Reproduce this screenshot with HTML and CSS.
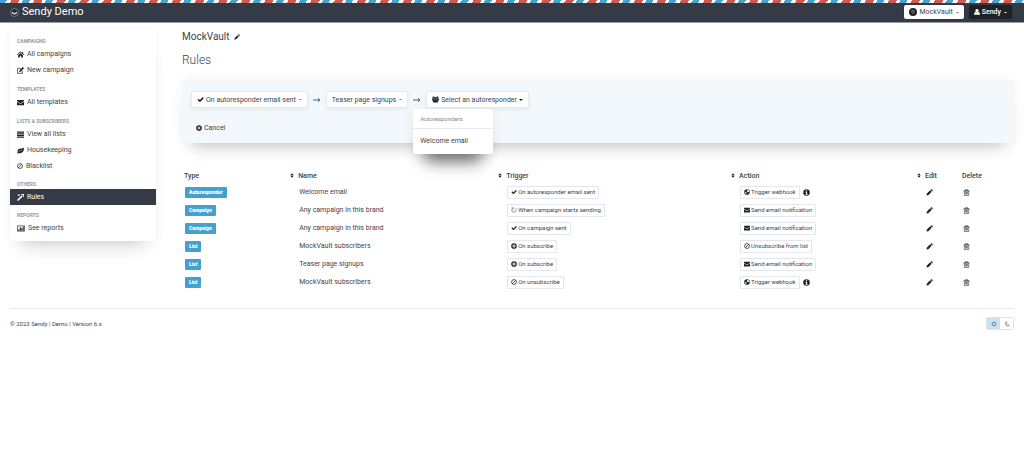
FILE: index.html
```html
<!DOCTYPE html>
<html lang="en">
<head>
<meta charset="utf-8">
<meta name="viewport" content="width=device-width, initial-scale=1">
<title>Rules - Sendy Demo</title>
<link rel="stylesheet" href="styles.css">
</head>
<body>
<svg class="sprite" aria-hidden="true">
  <symbol id="check" viewBox="0 0 16 16"><path d="M1 8.500l2.500-2.500 3 3L13 2.500 15.500 5l-9 9z"/></symbol>
  <symbol id="home" viewBox="0 0 16 16"><path d="M8 1l8 7-1.200 1.300L8 3.500 1.200 9.300 0 8l8-7zM11.500 2H14v4l-2.500-2zM8 5l5.500 4.700V15H9.500v-4h-3v4h-4V9.700z"/></symbol>
  <symbol id="compose" viewBox="0 0 16 16"><path d="M12.500 9.500V14.500H1V3H9" fill="none" stroke="currentColor" stroke-width="1.600"/><path d="M13.200 0L16 2.800 8.500 11 5 11.500 5.600 8z"/></symbol>
  <symbol id="mail" viewBox="0 0 16 16"><path d="M0 2h16v2.500L8 10 0 4.500z"/><path d="M0 6l8 5.500L16 6v8.500H0z"/></symbol>
  <symbol id="list" viewBox="0 0 16 16"><path d="M0 1h16v3H0zM0 5h16v3H0zM0 9h16v3H0zM0 13h16v2.500H0z"/></symbol>
  <symbol id="leaf" viewBox="0 0 16 16"><path d="M15.500 1C17 8 13 14 7 14c-2 0-3-.8-4-.5L1 15.500 0 14l1.500-2.200C0 6.500 4 3.500 9 3.500c3 0 5-1 6.500-2.500z"/><path d="M4 11c2-2.500 4-3.500 8-4" fill="none" stroke="#fff" stroke-width="1"/></symbol>
  <symbol id="ban" viewBox="0 0 16 16"><circle cx="8" cy="8" r="6.500" fill="none" stroke="currentColor" stroke-width="2"/><path d="M3.700 12.300l8.600-8.600" stroke="currentColor" stroke-width="2"/></symbol>
  <symbol id="wand" viewBox="0 0 16 16"><path d="M0 13.500L10.500 3 13 5.500 2.500 16zM1 1h6l-1 3H2zM10 0h6v6l-2 1V2.500h-4z"/></symbol>
  <symbol id="chart" viewBox="0 0 18 16"><path d="M.8 2h16.400v12H.8z" fill="none" stroke="currentColor" stroke-width="1.600"/><path d="M3 9h2.300v4H3zM6.300 5h2.300v8H6.300zM9.600 7h2.300v6H9.600zM13 4h2.300v9H13z"/></symbol>
  <symbol id="pencil" viewBox="0 0 16 16"><path d="M1 15l1-4.500L9.500 3 13 6.500 5.500 14zM10.500 2L12 .8c.5-.4 1-.4 1.500 0L15.300 2.600c.4.500.4 1 0 1.500L14 5.500z"/></symbol>
  <symbol id="cross" viewBox="0 0 16 16"><path fill-rule="evenodd" d="M8 .5a7.500 7.500 0 100 15 7.500 7.500 0 000-15zM5.500 4L8 6.500 10.500 4 12 5.500 9.500 8l2.500 2.500-1.500 1.500L8 9.500 5.500 12 4 10.500 6.500 8 4 5.500z"/></symbol>
  <symbol id="plus" viewBox="0 0 16 16"><path fill-rule="evenodd" d="M8 .5a7.500 7.500 0 100 15 7.500 7.500 0 000-15zM6.800 3.500h2.400v3.300h3.300v2.400H9.200v3.300H6.800V9.200H3.500V6.800h3.300z"/></symbol>
  <symbol id="info" viewBox="0 0 16 16"><path fill-rule="evenodd" d="M8 .5a7.500 7.500 0 100 15 7.500 7.500 0 000-15zM6.700 2.800h2.600v2.400H6.700zM5.700 6.300h3.700v5.200h1.200v1.800H5.700v-1.800H7V8.100H5.700z"/></symbol>
  <symbol id="spin" viewBox="0 0 16 16"><path d="M4 3.500a6 6 0 108.500.2" fill="none" stroke="currentColor" stroke-width="1.600" stroke-dasharray="4 1"/><path d="M1.500 2H6v4.500" fill="none" stroke="currentColor" stroke-width="1.200"/></symbol>
  <symbol id="globe" viewBox="0 0 16 16"><path fill-rule="evenodd" d="M8 .5a7.500 7.500 0 100 15 7.500 7.500 0 000-15zM8.500 3l3.500-.5 2 4-1.500 2.500-2-1.500L8 7.500 7 5.500zM2.500 7l3 1.500 1.500 2-1 3-2.500-2z"/></symbol>
  <symbol id="users" viewBox="0 0 18 16"><circle cx="4" cy="3" r="3"/><circle cx="14" cy="3" r="3"/><circle cx="9" cy="6" r="3.500"/><path d="M0 10V7c0-1.500 2-1.500 4-1.500L6 9l-3 2zM18 10V7c0-1.500-2-1.500-4-1.500L12 9l3 2zM2.500 16C2 11 4 9.500 9 9.500s7 1.500 6.500 6.500z"/></symbol>
  <symbol id="user" viewBox="0 0 16 16"><circle cx="8" cy="4.500" r="4.500"/><path d="M0 15.500C0 10 2 8.500 4.500 8c2 1.500 5 1.500 7 0 2.500.5 4.500 2 4.500 7.500z"/></symbol>
  <symbol id="trash" viewBox="0 0 16 16"><path d="M3 4.500h10V15H3zM1 4h14M5.500 3.500V1.500h5v2M6 6.500v6M8 6.500v6M10 6.500v6" fill="none" stroke="currentColor" stroke-width="1.300"/></symbol>
  <symbol id="arrow" viewBox="0 0 16 12"><path d="M0 6h13M10 2.500L14 6l-4 3.500" fill="none" stroke="currentColor" stroke-width="2"/></symbol>
  <symbol id="sort" viewBox="0 0 8 12"><path d="M0 5.500l4-5 4 5zM0 6.500h8l-4 5z"/></symbol>
  <symbol id="sun" viewBox="0 0 16 16"><circle cx="8" cy="8" r="4.500" fill="none" stroke="currentColor" stroke-width="2"/><path d="M8 0v2M8 14v2M0 8h2M14 8h2M2.300 2.300l1.500 1.500M12.200 12.200l1.500 1.500M2.300 13.700l1.500-1.500M12.200 3.800l1.500-1.500" stroke="currentColor" stroke-width="1.300"/></symbol>
  <symbol id="moon" viewBox="0 0 16 16"><path d="M7 2a6 6 0 107 9.500C9.500 12.500 6 8 7 2z" fill="none" stroke="currentColor" stroke-width="1.800"/></symbol>
  <symbol id="logo" viewBox="0 0 16 16"><circle cx="8" cy="8" r="7" fill="#23272f" stroke="#aab0ba" stroke-width="1"/><path d="M3.500 6L8 9.500 12.500 6v2.500c0 4-9 4-9 0z" fill="#d8dbe0"/></symbol>
  <symbol id="vault" viewBox="0 0 16 16"><circle cx="8" cy="8" r="8" fill="#20242c"/><path d="M3.500 5.500h9M4.500 8h7M6 10.500h3.500" stroke="#aeb4bd" stroke-width="1"/></symbol>
</svg>

<header class="topbar">
  <a class="brand" href="#"><svg class="icon icon-logo"><use href="#logo"/></svg>Sendy Demo</a>
  <div class="account">
    <button class="btn btn-brand" type="button"><svg class="icon icon-vault"><use href="#vault"/></svg>MockVault<i class="caret"></i></button>
    <button class="btn btn-user" type="button"><svg class="icon icon-small"><use href="#user"/></svg>Sendy<i class="caret"></i></button>
  </div>
</header>

<div class="layout">
  <nav class="sidebar">
    <h2>Campaigns</h2>
    <a href="#"><svg class="icon"><use href="#home"/></svg>All campaigns</a>
    <a href="#"><svg class="icon"><use href="#compose"/></svg>New campaign</a>
    <h2>Templates</h2>
    <a href="#"><svg class="icon"><use href="#mail"/></svg>All templates</a>
    <h2>Lists &amp; subscribers</h2>
    <a href="#"><svg class="icon"><use href="#list"/></svg>View all lists</a>
    <a href="#"><svg class="icon"><use href="#leaf"/></svg>Housekeeping</a>
    <a href="#"><svg class="icon icon-small"><use href="#ban"/></svg>Blacklist</a>
    <h2>Others</h2>
    <a class="active" href="#"><svg class="icon"><use href="#wand"/></svg>Rules</a>
    <h2>Reports</h2>
    <a href="#"><svg class="icon icon-wide"><use href="#chart"/></svg>See reports</a>
  </nav>

  <main>
    <div class="brand-name">MockVault <button class="plain" type="button" aria-label="Edit brand"><svg class="icon icon-small"><use href="#pencil"/></svg></button></div>
    <h1>Rules</h1>

    <section class="panel">
      <div class="steps">
        <button class="btn" type="button"><svg class="icon"><use href="#check"/></svg>On autoresponder email sent<i class="caret"></i></button>
        <svg class="icon arrow"><use href="#arrow"/></svg>
        <button class="btn" type="button">Teaser page signups<i class="caret"></i></button>
        <svg class="icon arrow"><use href="#arrow"/></svg>
        <div class="dropdown">
          <button class="btn" type="button" aria-expanded="true"><svg class="icon"><use href="#users"/></svg>Select an autoresponder<i class="caret dark"></i></button>
          <div class="menu">
            <div class="menu-title">Autoresponders</div>
            <a href="#">Welcome email</a>
          </div>
        </div>
      </div>
      <button class="plain cancel" type="button"><svg class="icon icon-small"><use href="#cross"/></svg>Cancel</button>
    </section>

    <table class="rules">
      <colgroup><col class="c-type"><col class="c-name"><col class="c-trigger"><col class="c-action"><col class="c-edit"><col class="c-delete"></colgroup>
      <thead>
        <tr>
          <th>Type</th>
          <th><svg class="icon sort"><use href="#sort"/></svg>Name</th>
          <th><svg class="icon sort"><use href="#sort"/></svg>Trigger</th>
          <th><svg class="icon sort"><use href="#sort"/></svg>Action</th>
          <th><svg class="icon sort"><use href="#sort"/></svg>Edit</th>
          <th>Delete</th>
        </tr>
      </thead>
      <tbody>
        <tr>
          <td><span class="label">Autoresponder</span></td><td>Welcome email</td>
          <td><span class="tag"><svg class="icon"><use href="#check"/></svg>On autoresponder email sent</span></td>
          <td><span class="tag"><svg class="icon"><use href="#globe"/></svg>Trigger webhook</span><svg class="icon info"><use href="#info"/></svg></td>
          <td><button class="plain" type="button" aria-label="Edit"><svg class="icon"><use href="#pencil"/></svg></button></td>
          <td><button class="plain" type="button" aria-label="Delete"><svg class="icon"><use href="#trash"/></svg></button></td>
        </tr>
        <tr>
          <td><span class="label">Campaign</span></td><td>Any campaign in this brand</td>
          <td><span class="tag"><svg class="icon"><use href="#spin"/></svg>When campaign starts sending</span></td>
          <td><span class="tag"><svg class="icon"><use href="#mail"/></svg>Send email notification</span></td>
          <td><button class="plain" type="button" aria-label="Edit"><svg class="icon"><use href="#pencil"/></svg></button></td>
          <td><button class="plain" type="button" aria-label="Delete"><svg class="icon"><use href="#trash"/></svg></button></td>
        </tr>
        <tr>
          <td><span class="label">Campaign</span></td><td>Any campaign in this brand</td>
          <td><span class="tag"><svg class="icon"><use href="#check"/></svg>On campaign sent</span></td>
          <td><span class="tag"><svg class="icon"><use href="#mail"/></svg>Send email notification</span></td>
          <td><button class="plain" type="button" aria-label="Edit"><svg class="icon"><use href="#pencil"/></svg></button></td>
          <td><button class="plain" type="button" aria-label="Delete"><svg class="icon"><use href="#trash"/></svg></button></td>
        </tr>
        <tr>
          <td><span class="label">List</span></td><td>MockVault subscribers</td>
          <td><span class="tag"><svg class="icon"><use href="#plus"/></svg>On subscribe</span></td>
          <td><span class="tag"><svg class="icon"><use href="#ban"/></svg>Unsubscribe from list</span></td>
          <td><button class="plain" type="button" aria-label="Edit"><svg class="icon"><use href="#pencil"/></svg></button></td>
          <td><button class="plain" type="button" aria-label="Delete"><svg class="icon"><use href="#trash"/></svg></button></td>
        </tr>
        <tr>
          <td><span class="label">List</span></td><td>Teaser page signups</td>
          <td><span class="tag"><svg class="icon"><use href="#plus"/></svg>On subscribe</span></td>
          <td><span class="tag"><svg class="icon"><use href="#mail"/></svg>Send email notification</span></td>
          <td><button class="plain" type="button" aria-label="Edit"><svg class="icon"><use href="#pencil"/></svg></button></td>
          <td><button class="plain" type="button" aria-label="Delete"><svg class="icon"><use href="#trash"/></svg></button></td>
        </tr>
        <tr>
          <td><span class="label">List</span></td><td>MockVault subscribers</td>
          <td><span class="tag"><svg class="icon"><use href="#ban"/></svg>On unsubscribe</span></td>
          <td><span class="tag"><svg class="icon"><use href="#globe"/></svg>Trigger webhook</span><svg class="icon info"><use href="#info"/></svg></td>
          <td><button class="plain" type="button" aria-label="Edit"><svg class="icon"><use href="#pencil"/></svg></button></td>
          <td><button class="plain" type="button" aria-label="Delete"><svg class="icon"><use href="#trash"/></svg></button></td>
        </tr>
      </tbody>
    </table>
  </main>
</div>

<footer class="footer">
  <p>© 2023 <a href="#">Sendy</a> | <a href="#">Demo</a> | Version 6.x</p>
  <div class="theme">
    <button class="on" type="button" aria-label="Light theme"><svg class="icon"><use href="#sun"/></svg></button>
    <button type="button" aria-label="Dark theme"><svg class="icon"><use href="#moon"/></svg></button>
  </div>
</footer>
</body>
</html>
```
FILE: styles.css
```css
* { box-sizing: border-box; }
body {
  margin: 0;
  background: #fff;
  color: #3d434c;
  font-family: Roboto, "Liberation Sans", sans-serif;
  font-size: 7px;
  line-height: 10px;
}
a { color: inherit; text-decoration: none; }
button { font: inherit; color: inherit; cursor: pointer; }
.sprite { display: none; }
.icon { width: 7px; height: 7px; flex: none; fill: currentColor; color: #1f242c; }
.icon-small { width: 6px; height: 6px; }
.icon-wide { width: 8px; }

.topbar {
  display: flex;
  align-items: center;
  justify-content: space-between;
  height: 23px;
  padding: 3px 12px 1px 10px;
  border-bottom: 1px solid #9a9fa7;
  background:
    repeating-linear-gradient(120deg, #4aa3cf 0 6px, #fff 6px 10px, #cf5a52 10px 17px, #fff 17px 20px) top / 100% 3px no-repeat,
    #343a46;
}
.brand { display: flex; align-items: center; gap: 3px; color: #fff; font-size: 11px; line-height: 14px; }
.icon-logo { width: 9px; height: 9px; }
.account { display: flex; gap: 5px; }
.btn {
  display: flex;
  align-items: center;
  gap: 2px;
  height: 17px;
  padding: 0 5px;
  border: 1px solid #e7eaed;
  border-radius: 2px;
  background: #fff;
  box-shadow: 0 2px 4px rgba(0, 0, 0, .06);
  white-space: nowrap;
}
.btn-brand, .btn-user { height: 14px; border: 0; }
.btn-user { background: #202124; color: #fff; font-weight: 500; }
.btn-user .icon { color: #fff; }
.icon-vault { width: 8px; height: 8px; }
.caret { border: 1px solid transparent; border-top-color: #777; border-bottom: 0; width: 3px; margin-left: 1px; }
.btn-user .caret { border-top-color: #fff; }
.caret.dark { border-width: 2px 2px 0; width: 4px; border-top-color: #222; margin-left: 0; }

.layout {
  display: grid;
  grid-template-columns: 146px minmax(0, 1fr);
  gap: 26px;
  align-items: start;
  padding: 7px 10px 0;
}
.sidebar {
  padding-bottom: 5px;
  border-radius: 2px;
  background: #fff;
  box-shadow: 0 0 10px rgba(0, 0, 0, .05), 0 16px 18px -12px rgba(0, 0, 0, .18);
}
.sidebar h2 {
  margin: 0;
  padding: 6px 7px 0;
  color: #999;
  font-size: 5px;
  font-weight: 700;
  line-height: 10px;
  text-transform: uppercase;
}
.sidebar a { display: flex; align-items: center; gap: 3px; height: 16px; padding: 0 7px; }
.sidebar h2:nth-of-type(n + 4) { padding-top: 5px; }
.sidebar .active { background: #343a46; color: #fff; }
.active .icon { color: #fff; }

.brand-name { display: flex; align-items: center; gap: 4px; font-size: 10px; line-height: 14px; }
h1 { margin: 8px 0 11px; font-size: 12px; font-weight: 300; line-height: 17px; }
.plain { display: inline-flex; align-items: center; gap: 2px; padding: 0; border: 0; background: none; vertical-align: middle; }
.panel {
  padding: 11px 9px 10px;
  border-radius: 2px;
  background: #f3f8fc;
  box-shadow: 0 0 14px rgba(0, 0, 0, .05), 0 14px 16px -10px rgba(0, 0, 0, .2);
}
.steps { display: flex; align-items: center; }
.arrow { width: 8px; height: 6px; margin: 0 5px; color: #3c6480; }
.dropdown { position: relative; }
.menu {
  position: absolute;
  top: 18px;
  left: -13px;
  width: 80px;
  padding: 5px 0 8px;
  border-radius: 2px;
  background: #fff;
  box-shadow: 0 20px 16px -12px rgba(0, 0, 0, .55), 0 4px 12px rgba(0, 0, 0, .08);
}
.menu-title { padding: 0 7px 4px; border-bottom: 1px solid #e9ecef; color: #888; font-size: 6px; }
.menu a { display: block; padding: 7px 7px 0; }
.cancel { margin: 15px 0 0 5px; }

.rules { width: 100%; margin-top: 26px; border-collapse: collapse; table-layout: fixed; }
.c-type { width: 13%; }
.c-name { width: 25%; }
.c-trigger { width: 28%; }
.c-edit { width: 43px; }
.c-delete { width: 54px; }
.rules th { height: 14px; padding: 0 2px; text-align: left; font-weight: 500; white-space: nowrap; }
.rules th + th { padding-left: 0; }
.rules th:last-child { padding-left: 2px; }
.rules td { height: 18px; padding: 0 0 0 9px; white-space: nowrap; }
.rules td:first-child, .rules td:last-child { padding-left: 3px; }
.rules th, .rules td, .rules td .icon { vertical-align: middle; }
.sort { width: 4px; height: 5px; margin-right: 4px; }
.label {
  display: inline-block;
  padding: 0 4px;
  border-radius: 1px;
  background: #43a1cf;
  color: #fff;
  font-size: 5px;
  font-weight: 900;
  line-height: 11px;
  vertical-align: middle;
}
.tag {
  display: inline-flex;
  align-items: center;
  gap: 1px;
  height: 13px;
  padding: 0 3px;
  border: 1px solid #e2e7ec;
  border-radius: 1px;
  font-size: 6px;
  vertical-align: middle;
}
.tag .icon { width: 6px; height: 6px; }
.info { margin-left: 3px; }

.footer {
  display: flex;
  align-items: center;
  justify-content: space-between;
  margin: 17px 10px 0;
  padding-top: 8px;
  border-top: 1px solid #e8e8e8;
  font-size: 6px;
}
.footer p { margin: 0; }
.theme { display: flex; border: 1px solid #e0e4e8; border-radius: 2px; }
.theme button { display: flex; align-items: center; justify-content: center; width: 13px; height: 11px; padding: 0; border: 0; background: #fff; }
.theme .on { background: #c9e2f2; }
.theme .icon { width: 6px; height: 6px; color: #66717f; }
```
